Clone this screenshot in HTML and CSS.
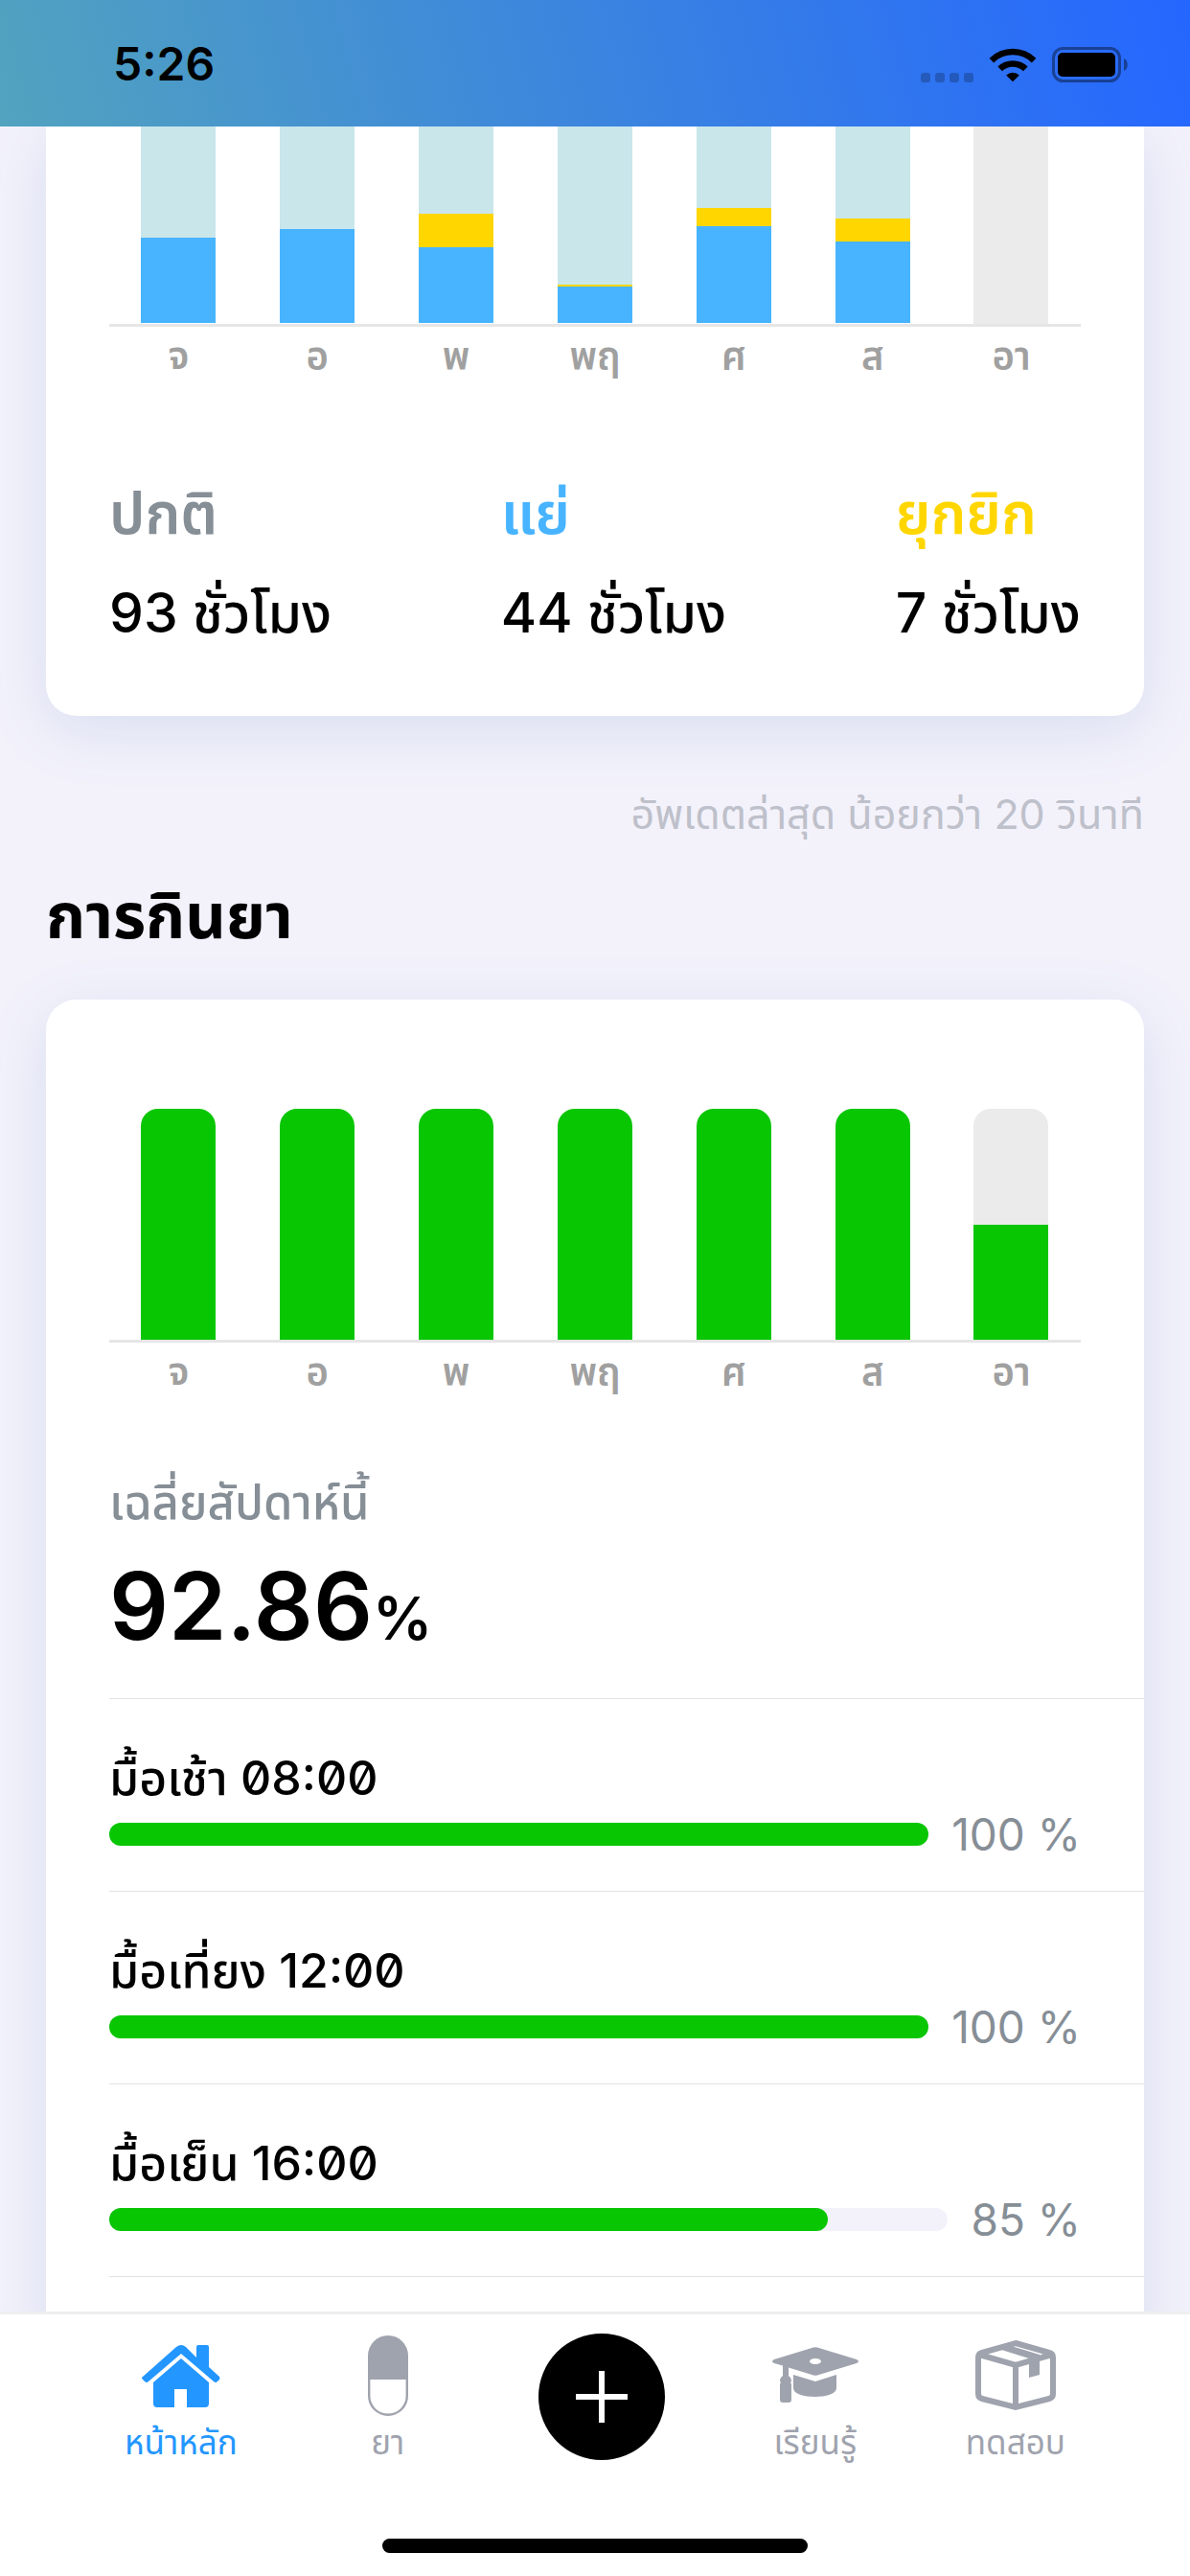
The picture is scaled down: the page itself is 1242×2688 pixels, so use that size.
FILE: index.html
```html
<!DOCTYPE html>
<html lang="th">
<head>
    <meta charset="UTF-8">
    <meta name="viewport" content="width=device-width, initial-scale=1.0">
    <title>หน้าหลัก</title>
    <link rel="stylesheet" href="styles.css">
</head>
<body>
    <header class="status-bar">
        <span class="time">5:26</span>
        <div class="status-icons">
            <svg class="icon-signal" width="55" height="10" viewBox="0 0 55 10">
                <rect x="0" width="10" height="10" rx="3"/>
                <rect x="15" width="10" height="10" rx="3"/>
                <rect x="30" width="10" height="10" rx="3"/>
                <rect x="45" width="10" height="10" rx="3"/>
            </svg>
            <svg class="icon-wifi" width="50" height="37" viewBox="0 0 50 37">
                <path d="M0.600 11.800A34.600 34.600 0 0 1 49.400 11.800L44.800 16.400A28 28 0 0 0 5.200 16.400Z"/>
                <path d="M9.400 20.600A22.200 22.200 0 0 1 40.600 20.600L36 25.200A15.700 15.700 0 0 0 14 25.200Z"/>
                <path d="M18.200 29.400A9.800 9.800 0 0 1 31.800 29.400L25 36.200Z"/>
            </svg>
            <svg class="icon-battery" width="80" height="37" viewBox="0 0 80 37">
                <rect class="battery-line" x="1.500" y="1.500" width="69" height="34" rx="10"/>
                <rect x="6" y="6" width="60" height="25" rx="5"/>
                <path class="battery-tip" d="M75 12C80 14 80 23 75 25Z"/>
            </svg>
        </div>
    </header>

    <main class="content">
        <section class="card card-tremor">
            <div class="chart chart-cut">
                <div class="bar stacked"><i class="bad" style="height: 89px"></i></div>
                <div class="bar stacked"><i class="bad" style="height: 98px"></i></div>
                <div class="bar stacked"><i class="bad" style="height: 79px"></i><i class="dyskinesia" style="height: 35px"></i></div>
                <div class="bar stacked"><i class="bad" style="height: 38px"></i><i class="dyskinesia" style="height: 2px"></i></div>
                <div class="bar stacked"><i class="bad" style="height: 101px"></i><i class="dyskinesia" style="height: 19px"></i></div>
                <div class="bar stacked"><i class="bad" style="height: 85px"></i><i class="dyskinesia" style="height: 24px"></i></div>
                <div class="bar"></div>
            </div>
            <div class="days">
                <span>จ</span><span>อ</span><span>พ</span><span>พฤ</span><span>ศ</span><span>ส</span><span>อา</span>
            </div>
            <dl class="summary">
                <div>
                    <dt class="normal-text">ปกติ</dt>
                    <dd>93 ชั่วโมง</dd>
                </div>
                <div>
                    <dt class="bad-text">แย่</dt>
                    <dd>44 ชั่วโมง</dd>
                </div>
                <div>
                    <dt class="dyskinesia-text">ยุกยิก</dt>
                    <dd>7 ชั่วโมง</dd>
                </div>
            </dl>
        </section>

        <p class="updated">อัพเดตล่าสุด น้อยกว่า 20 วินาที</p>
        <h2 class="section-title">การกินยา</h2>

        <section class="card card-medicine">
            <div class="chart">
                <div class="bar rounded"><i class="taken" style="height: 100%"></i></div>
                <div class="bar rounded"><i class="taken" style="height: 100%"></i></div>
                <div class="bar rounded"><i class="taken" style="height: 100%"></i></div>
                <div class="bar rounded"><i class="taken" style="height: 100%"></i></div>
                <div class="bar rounded"><i class="taken" style="height: 100%"></i></div>
                <div class="bar rounded"><i class="taken" style="height: 100%"></i></div>
                <div class="bar rounded"><i class="taken" style="height: 50%"></i></div>
            </div>
            <div class="days">
                <span>จ</span><span>อ</span><span>พ</span><span>พฤ</span><span>ศ</span><span>ส</span><span>อา</span>
            </div>
            <div class="average">
                <h3>เฉลี่ยสัปดาห์นี้</h3>
                <p class="average-value">92.86<small>%</small></p>
            </div>
            <ul class="meals">
                <li>
                    <p class="meal-name">มื้อเช้า 08:00</p>
                    <div class="meal-row">
                        <div class="track"><div class="fill" style="width: 100%"></div></div>
                        <span>100 %</span>
                    </div>
                </li>
                <li>
                    <p class="meal-name">มื้อเที่ยง 12:00</p>
                    <div class="meal-row">
                        <div class="track"><div class="fill" style="width: 100%"></div></div>
                        <span>100 %</span>
                    </div>
                </li>
                <li>
                    <p class="meal-name">มื้อเย็น 16:00</p>
                    <div class="meal-row">
                        <div class="track"><div class="fill" style="width: 85.7%"></div></div>
                        <span>85 %</span>
                    </div>
                </li>
                <li></li>
            </ul>
        </section>
    </main>

    <nav class="tab-bar">
        <div class="tabs">
            <a class="tab active" href="#home">
                <svg width="86" height="88" viewBox="0 0 86 88">
                    <path d="M3 45L38 14Q43 10 48 14L59 25V14Q59 12 61 12H70Q72 12 72 14V35L83 45Q84 46 83 48L81 50Q79 52 77 50L43 21L9 50Q7 52 5 50L3 48Q1 46 3 45Z"/>
                    <path d="M43 26L72 51V73Q72 77 68 77H49V58H36V77H18Q14 77 14 73V51Z"/>
                </svg>
                <span>หน้าหลัก</span>
            </a>
            <a class="tab" href="#medicine">
                <svg width="84" height="88" viewBox="0 0 84 88">
                    <path d="M21 48V23A21 21 0 0 1 63 23V48Z"/>
                    <path class="line" d="M22.200 47V65A19.800 19.800 0 0 0 61.800 65V47"/>
                </svg>
                <span>ยา</span>
            </a>
            <button class="add" type="button" aria-label="เพิ่ม">
                <svg width="54" height="54" viewBox="0 0 54 54">
                    <path d="M27 0V54M0 27H54"/>
                </svg>
            </button>
            <a class="tab" href="#learn">
                <svg width="90" height="88" viewBox="0 0 90 88">
                    <path fill-rule="evenodd" d="M2 27L43 14.500Q45 14 47 14.500L88 27Q92 29 88 31L47 43.500Q45 44 43 43.500L17 35.500V44Q20 46 20 50L19 51Q20 52 20 54V69Q20 72 17 72H11Q8 72 8 69V54Q8 52 9 51L8 50Q8 46 11 44V33.500L2 31Q-2 29 2 27ZM45 26C37 26 37 32 45 32S53 26 45 26Z"/>
                    <path d="M22 43L45 50L67 43V57C67 69 22 69 22 57Z"/>
                </svg>
                <span>เรียนรู้</span>
            </a>
            <a class="tab" href="#test">
                <svg width="86" height="88" viewBox="0 0 86 88">
                    <path class="box-line" d="M43 10L78 20Q82 21 82 25V63Q82 67 78 68L43 77L8 68Q4 67 4 63V25Q4 21 8 20ZM5 22L43 33L81 22M43 33V77"/>
                    <path d="M22 15L32 11L68 22V43L57 46V26Z"/>
                </svg>
                <span>ทดสอบ</span>
            </a>
        </div>
        <div class="home-indicator"></div>
    </nav>
</body>
</html>
```

FILE: styles.css
```css
* {
    box-sizing: border-box;
}
body {
    margin: 0;
    height: 100vh;
    display: flex;
    flex-direction: column;
    background-color: #f3f2fb;
    color: #000;
    font-family: Inter, "Noto Sans Thai", "Noto Sans", sans-serif;
}
h2, h3, p, ul, dl, dd {
    margin: 0;
    padding: 0;
}
ul {
    list-style: none;
}

/* status bar */
.status-bar {
    flex: none;
    height: 132px;
    padding: 0 64px 0 118px;
    display: flex;
    align-items: center;
    justify-content: space-between;
    background: linear-gradient(75deg, #51a3bf 0%, #2566ff 100%);
    z-index: 1;
}
.time {
    font-size: 48px;
    font-weight: 600;
    line-height: 64px;
    padding-top: 2px;
}
.status-icons {
    display: flex;
    align-items: flex-end;
    gap: 16px;
    padding-top: 2px;
}
.icon-signal {
    opacity: 0.22;
}
.battery-line {
    fill: none;
    stroke: #000;
    stroke-width: 3;
    opacity: 0.4;
}
.battery-tip {
    opacity: 0.4;
}

/* content */
.content {
    flex: 1;
    min-height: 0;
    overflow: hidden;
    padding: 0 48px;
}
.card {
    background-color: #fff;
    border-radius: 32px;
    box-shadow: 0 15px 60px rgba(90, 125, 190, 0.17);
    padding-left: 66px;
}
.card-tremor {
    height: 615px;
    border-top-left-radius: 0;
    border-top-right-radius: 0;
}
.chart {
    height: 244px;
    margin-right: 66px;
    display: flex;
    justify-content: space-around;
    border-bottom: 3px solid #e6e6e6;
}
.chart-cut {
    height: 209px;
}
.bar {
    width: 78px;
    display: flex;
    flex-direction: column-reverse;
    background-color: #ebebeb;
    overflow: hidden;
}
.bar.stacked {
    background-color: #c9e6eb;
    margin-bottom: 1px;
}
.bar.rounded {
    border-radius: 18px 18px 0 0;
}
.bad {
    background-color: #48b4ff;
}
.dyskinesia {
    background-color: #ffd600;
}
.taken {
    background-color: #08c602;
}
.days {
    display: flex;
    margin-right: 66px;
    color: #a0a0a0;
    font-size: 40px;
    font-weight: 600;
    line-height: 62px;
}
.days span {
    flex: 1;
    text-align: center;
}
.summary {
    display: flex;
    justify-content: space-between;
    margin: 86px 66px 0 0;
    font-weight: 600;
}
.summary dt {
    font-size: 60px;
    line-height: 92px;
}
.summary dd {
    font-size: 57px;
    font-weight: 500;
    line-height: 118px;
}
.normal-text {
    color: #868e96;
}
.bad-text {
    color: #48b4ff;
}
.dyskinesia-text {
    color: #ffd600;
}
.updated {
    margin-top: 70px;
    text-align: right;
    color: #bec0ca;
    font-size: 43px;
    line-height: 64px;
}
.section-title {
    margin-top: 30px;
    margin-bottom: 44px;
    font-size: 66px;
    line-height: 88px;
}
.card-medicine {
    padding-top: 114px;
}
.average {
    padding-top: 62px;
    height: 309px;
}
.average h3 {
    color: #868e96;
    font-size: 49px;
    font-weight: 500;
    line-height: 86px;
}
.average-value {
    font-size: 97px;
    font-weight: 600;
    line-height: 130px;
}
.average-value small {
    font-size: 62px;
}
.meals li {
    height: 201px;
    padding: 48px 66px 0 0;
    border-top: 1px solid #e2e2e4;
}
.meal-name {
    font-size: 50px;
    font-weight: 500;
    line-height: 68px;
    font-feature-settings: "zero";
}
.meal-row {
    display: flex;
    align-items: center;
    gap: 24px;
    color: #868e96;
    font-size: 46px;
    line-height: 50px;
}
.track {
    flex: 1;
    height: 24px;
    border-radius: 12px;
    background-color: #f3f2fb;
}
.fill {
    height: 24px;
    border-radius: 12px;
    background-color: #08c602;
}

/* bottom navigation */
.tab-bar {
    flex: none;
    height: 276px;
    display: flex;
    flex-direction: column;
    justify-content: space-between;
    background-color: #fff;
    border-top: 3px solid #eee;
    padding: 20px 0 24px;
    z-index: 1;
}
.tabs {
    display: flex;
    justify-content: center;
    gap: 112px;
}
.tab {
    min-width: 90px;
    display: flex;
    flex-direction: column;
    align-items: center;
    color: #9fa3ae;
    font-size: 35px;
    line-height: 50px;
    text-decoration: none;
}
.tab.active {
    color: #2396ff;
}
.tab svg {
    fill: currentColor;
}
.tab .line {
    fill: none;
    stroke: currentColor;
    stroke-width: 2.400;
}
.tab .box-line {
    fill: none;
    stroke: currentColor;
    stroke-width: 6;
}
.add {
    width: 132px;
    height: 132px;
    padding: 0;
    border: none;
    border-radius: 50%;
    background-color: #000;
    display: flex;
    align-items: center;
    justify-content: center;
}
.add svg {
    stroke: #fff;
    stroke-width: 6;
}
.home-indicator {
    width: 444px;
    height: 15px;
    margin: 0 auto;
    border-radius: 8px;
    background-color: #000;
}
```
